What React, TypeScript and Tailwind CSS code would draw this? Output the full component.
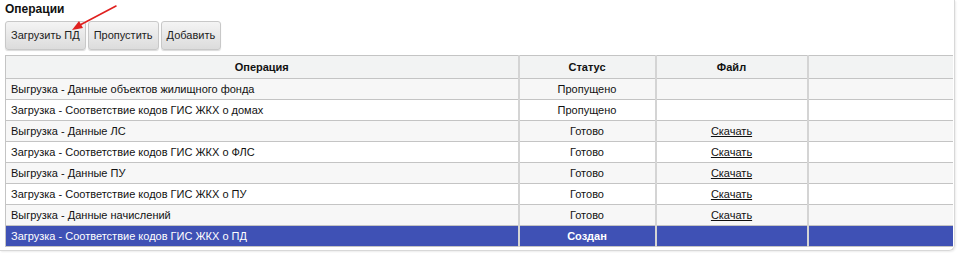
import React from 'react';

type Row = { name: string; status: string; file?: boolean };

const rows: Row[] = [
  { name: 'Выгрузка - Данные объектов жилищного фонда', status: 'Пропущено' },
  { name: 'Загрузка - Соответствие кодов ГИС ЖКХ о домах', status: 'Пропущено' },
  { name: 'Выгрузка - Данные ЛС', status: 'Готово', file: true },
  { name: 'Загрузка - Соответствие кодов ГИС ЖКХ о ФЛС', status: 'Готово', file: true },
  { name: 'Выгрузка - Данные ПУ', status: 'Готово', file: true },
  { name: 'Загрузка - Соответствие кодов ГИС ЖКХ о ПУ', status: 'Готово', file: true },
  { name: 'Выгрузка - Данные начислений', status: 'Готово', file: true },
  { name: 'Загрузка - Соответствие кодов ГИС ЖКХ о ПД', status: 'Создан' },
];

const Btn: React.FC<{ label: string }> = ({ label }) => (
  <button className="h-[29px] px-[5px] rounded-[3px] border border-[#c8c8c8] bg-gradient-to-b from-[#f4f4f4] to-[#dcdcdc] text-[11px] text-[#222] shadow-[0_1px_1px_rgba(0,0,0,0.15)]">
    {label}
  </button>
);

export default function App() {
  const selected = rows.length - 1;
  return (
    <div className="relative w-[958px] h-[253px] bg-white font-['Liberation_Sans',Arial,sans-serif] text-[11px] text-[#111] overflow-hidden">
      <div className="w-[955px] pb-[3px] border-r border-b border-[#d8d8d8] rounded-br-[6px] shadow-[1px_1px_2px_rgba(0,0,0,0.08)]">
        <div className="pl-[5px] pt-[1px] h-[20px] font-bold text-[12px] leading-[16px]">Операции</div>
        <div className="flex gap-[2px] pl-[5px] mt-[1px]">
          <Btn label="Загрузить ПД" />
          <Btn label="Пропустить" />
          <Btn label="Добавить" />
        </div>
        <table className="ml-[5px] mt-[5px] w-[947px] border-collapse table-fixed">
          <colgroup>
            <col className="w-[513px]" />
            <col className="w-[137px]" />
            <col className="w-[152px]" />
            <col className="w-[145px]" />
          </colgroup>
          <thead>
            <tr className="h-[23px] bg-[#f2f3f3]">
              <th className="border-t border-b border-l border-[#c4c4c4] font-bold text-center">Операция</th>
              <th className="border-t border-b border-l-2 border-[#c4c4c4] border-l-[#d4d4d4] font-bold text-center">Статус</th>
              <th className="border-t border-b border-l-2 border-[#c4c4c4] border-l-[#d4d4d4] font-bold text-center">Файл</th>
              <th className="border-t border-b border-l-2 border-[#c4c4c4] border-l-[#d4d4d4]"></th>
            </tr>
          </thead>
          <tbody>
            {rows.map((r, i) => {
              const sel = i === selected;
              const bg = sel ? 'bg-[#3f51b5] text-white' : i % 2 === 0 ? 'bg-[#f7f7f7]' : 'bg-white';
              return (
                <tr key={i} className={`h-[21px] ${bg}`}>
                  <td className="border-b border-l border-[#c4c4c4] pl-[5px] whitespace-nowrap">{r.name}</td>
                  <td className={`border-b border-l-2 border-[#c4c4c4] border-l-[#d4d4d4] text-center ${sel ? 'font-bold' : ''}`}>{r.status}</td>
                  <td className="border-b border-l-2 border-[#c4c4c4] border-l-[#d4d4d4] text-center">
                    {r.file && <a className="underline text-[#111] cursor-pointer">Скачать</a>}
                  </td>
                  <td className="border-b border-l-2 border-[#c4c4c4] border-l-[#d4d4d4]"></td>
                </tr>
              );
            })}
          </tbody>
        </table>
      </div>
      <svg className="absolute left-0 top-0" width="130" height="40" viewBox="0 0 130 40">
        <line x1="116" y1="6" x2="80" y2="25" stroke="#e0201f" strokeWidth="1.6" strokeLinecap="round" />
        <polygon points="72,30 79,21 83,28" fill="#e0201f" />
      </svg>
    </div>
  );
}
